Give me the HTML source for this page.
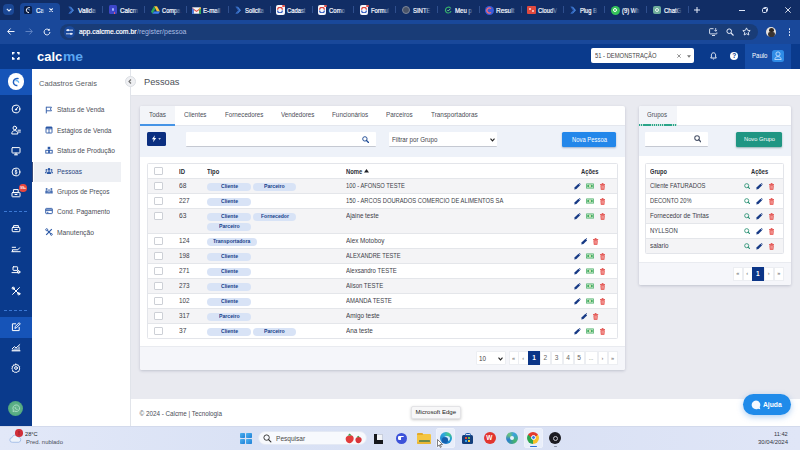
<!DOCTYPE html>
<html lang="pt-BR">
<head>
<meta charset="utf-8">
<title>Pessoas</title>
<style>
*{box-sizing:border-box;margin:0;padding:0}
html,body{width:800px;height:450px;overflow:hidden;background:#e9eaf0;font-family:"Liberation Sans",sans-serif;color:#333}
#root{position:relative;width:800px;height:450px;overflow:hidden}
#root div,#root span,#root svg{position:absolute}
.t{white-space:nowrap;line-height:1.16}
.card{background:#fff;border-radius:2px;box-shadow:0 1px 3px rgba(40,50,80,.22)}
</style>
</head>
<body>
<div id="root">
<section aria-label="browser tab strip" style="display:contents">
<div style="left:0px;top:0px;width:800px;height:21px;background:#112d65;"></div>
<div style="left:0px;top:19.5px;width:800px;height:24.5px;background:#19489a;"></div>
<div style="left:3px;top:4px;width:11px;height:11px;background:#1b4896;border-radius:4px"></div>
<svg style="left:6px;top:8px" width="6" height="4" viewBox="0 0 6 4"><path d="M.8.8 3 3 5.2.8" fill="none" stroke="#e8eefb" stroke-width="1.1"/></svg>
<div style="left:20px;top:3px;width:40px;height:18px;background:#19489a;border-radius:4px 4px 0 0"></div>
<div style="left:24.0px;top:6px;width:8px;height:8px;background:#0a1f4a;border-radius:1.5px"></div><svg style="left:24.0px;top:6px" width="8" height="8" viewBox="0 0 8 8"><path d="M5.8 1.6C4 1.2 2.3 2.4 2.3 4.1c0 1.5 1.2 2.5 2.7 2.4" fill="none" stroke="#fff" stroke-width="1"/><path d="M3.6 3.2c1-.4 2 .2 2 1.2" fill="none" stroke="#7fb6ff" stroke-width=".9"/></svg>
<span class="t" style="left:35.80px;top:7.00px;font-size:6.6px;color:#f6f8fe;transform:scaleX(0.948);transform-origin:0 0;-webkit-text-stroke:.22px #f6f8fe;">Ca</span>
<div style="left:40.5px;top:5px;width:4.5px;height:11px;background:linear-gradient(90deg,rgba(25,72,154,0),#19489a);"></div>
<svg style="left:67.55px;top:5.6px" width="6.500" height="8.300" viewBox="0 0 8 10"><path d="M.6.8h3L7.4 5 3.6 9.2h-3L4.2 5z" fill="#4a88dc"/><path d="M.6.800h1.800L5.600 5 2.400 9.200H.6L3.800 5z" fill="#2c5cb4"/></svg>
<span class="t" style="left:77.85px;top:7.00px;font-size:6.6px;color:#f6f8fe;transform:scaleX(1.008);transform-origin:0 0;-webkit-text-stroke:.22px #f6f8fe;">Valida</span>
<div style="left:89.85px;top:5px;width:7px;height:11px;background:linear-gradient(90deg,rgba(17,45,101,0),#112d65);"></div>
<div style="left:102.25px;top:6.3px;width:1px;height:7px;background:#2f4f8e;"></div>
<div style="left:108.7px;top:5px;width:8px;height:9px;background:#3d46c9;border-radius:1.5px"></div><div style="left:111.7px;top:8px;width:2px;height:3px;background:#9fb3ff;border-radius:1px"></div><div style="left:113.7px;top:12px;width:1.5px;height:1.5px;background:#ff5b6b;border-radius:1px"></div>
<span class="t" style="left:119.70px;top:7.00px;font-size:6.6px;color:#f6f8fe;transform:scaleX(0.963);transform-origin:0 0;-webkit-text-stroke:.22px #f6f8fe;">Calcm</span>
<div style="left:131.7px;top:5px;width:7px;height:11px;background:linear-gradient(90deg,rgba(17,45,101,0),#112d65);"></div>
<div style="left:144.1px;top:6.3px;width:1px;height:7px;background:#2f4f8e;"></div>
<svg style="left:150.55px;top:6px" width="9" height="8" viewBox="0 0 9 8"><path d="M3 .3h3L9 5.4H6z" fill="#f9c33a"/><path d="M3 .3 0 5.4l1.5 2.4L4.5 2.8z" fill="#2aa55a"/><path d="M1.5 7.8h6L9 5.4H3z" fill="#3d82f0"/></svg>
<span class="t" style="left:161.55px;top:7.00px;font-size:6.6px;color:#f6f8fe;transform:scaleX(0.870);transform-origin:0 0;-webkit-text-stroke:.22px #f6f8fe;">Compa</span>
<div style="left:174.05px;top:5px;width:7px;height:11px;background:linear-gradient(90deg,rgba(17,45,101,0),#112d65);"></div>
<div style="left:185.95000000000002px;top:6.3px;width:1px;height:7px;background:#2f4f8e;"></div>
<svg style="left:192.4px;top:6.8px" width="9" height="7" viewBox="0 0 9 7"><path d="M.3.300h8.400v6.400H.3z" fill="#f3f4f7"/><path d="M0 .6V7h1.800V3L4.500 5 7.200 3v4H9V.6L4.500 3.800z" fill="#e5493b"/><path d="M0 1v6h1.800V2.600z" fill="#3f7fe8"/><path d="M9 1v6H7.200V2.600z" fill="#34a853"/><path d="M7.200 3V.9L9 .6v1.200z" fill="#f6bb2d"/></svg>
<span class="t" style="left:203.40px;top:7.00px;font-size:6.6px;color:#f6f8fe;transform:scaleX(0.936);transform-origin:0 0;-webkit-text-stroke:.22px #f6f8fe;">E-mail</span>
<div style="left:214.9px;top:5px;width:7px;height:11px;background:linear-gradient(90deg,rgba(17,45,101,0),#112d65);"></div>
<div style="left:227.8px;top:6.3px;width:1px;height:7px;background:#2f4f8e;"></div>
<svg style="left:234.95px;top:5.6px" width="6.500" height="8.300" viewBox="0 0 8 10"><path d="M.6.8h3L7.4 5 3.6 9.2h-3L4.2 5z" fill="#4a88dc"/><path d="M.6.800h1.800L5.600 5 2.400 9.200H.6L3.800 5z" fill="#2c5cb4"/></svg>
<span class="t" style="left:245.25px;top:7.00px;font-size:6.6px;color:#f6f8fe;transform:scaleX(0.893);transform-origin:0 0;-webkit-text-stroke:.22px #f6f8fe;">Solicita</span>
<div style="left:258.25px;top:5px;width:7px;height:11px;background:linear-gradient(90deg,rgba(17,45,101,0),#112d65);"></div>
<div style="left:269.65px;top:6.3px;width:1px;height:7px;background:#2f4f8e;"></div>
<div style="left:276.1px;top:5px;width:8.5px;height:9.5px;background:#f6f7fb;border-radius:2px"></div><svg style="left:277.3px;top:6.6px" width="6" height="6" viewBox="0 0 6 6"><path d="M.6 2.700A2.400 2.400 0 0 1 5.400 2.700" fill="none" stroke="#e0453f" stroke-width="1.200"/><path d="M.6 3.500A2.400 2.400 0 0 0 5.400 3.500" fill="none" stroke="#3560c4" stroke-width="1.200"/></svg><div style="left:282.3px;top:4.8px;width:2.6px;height:2.6px;background:#e5554c;border-radius:50%"></div>
<span class="t" style="left:287.10px;top:7.00px;font-size:6.6px;color:#f6f8fe;transform:scaleX(0.885);transform-origin:0 0;-webkit-text-stroke:.22px #f6f8fe;">Cadast</span>
<div style="left:299.6px;top:5px;width:7px;height:11px;background:linear-gradient(90deg,rgba(17,45,101,0),#112d65);"></div>
<div style="left:311.5px;top:6.3px;width:1px;height:7px;background:#2f4f8e;"></div>
<div style="left:317.95px;top:5px;width:8.5px;height:9.5px;background:#f6f7fb;border-radius:2px"></div><svg style="left:319.15px;top:6.6px" width="6" height="6" viewBox="0 0 6 6"><path d="M.6 2.700A2.400 2.400 0 0 1 5.400 2.700" fill="none" stroke="#e0453f" stroke-width="1.200"/><path d="M.6 3.500A2.400 2.400 0 0 0 5.400 3.500" fill="none" stroke="#3560c4" stroke-width="1.200"/></svg><div style="left:324.15px;top:4.8px;width:2.6px;height:2.6px;background:#e5554c;border-radius:50%"></div>
<span class="t" style="left:328.95px;top:7.00px;font-size:6.6px;color:#f6f8fe;transform:scaleX(0.909);transform-origin:0 0;-webkit-text-stroke:.22px #f6f8fe;">Como</span>
<div style="left:338.95px;top:5px;width:7px;height:11px;background:linear-gradient(90deg,rgba(17,45,101,0),#112d65);"></div>
<div style="left:353.34999999999997px;top:6.3px;width:1px;height:7px;background:#2f4f8e;"></div>
<div style="left:359.8px;top:5px;width:8.5px;height:9.5px;background:#f6f7fb;border-radius:2px"></div><svg style="left:361.0px;top:6.6px" width="6" height="6" viewBox="0 0 6 6"><path d="M.6 2.700A2.400 2.400 0 0 1 5.400 2.700" fill="none" stroke="#e0453f" stroke-width="1.200"/><path d="M.6 3.500A2.400 2.400 0 0 0 5.400 3.500" fill="none" stroke="#3560c4" stroke-width="1.200"/></svg><div style="left:366.0px;top:4.8px;width:2.6px;height:2.6px;background:#e5554c;border-radius:50%"></div>
<span class="t" style="left:370.80px;top:7.00px;font-size:6.6px;color:#f6f8fe;transform:scaleX(0.877);transform-origin:0 0;-webkit-text-stroke:.22px #f6f8fe;">Formul</span>
<div style="left:382.8px;top:5px;width:7px;height:11px;background:linear-gradient(90deg,rgba(17,45,101,0),#112d65);"></div>
<div style="left:395.2px;top:6.3px;width:1px;height:7px;background:#2f4f8e;"></div>
<div style="left:401.65000000000003px;top:6px;width:8px;height:8px;background:#4a5468;border-radius:50%;border:1px solid #7d8699"></div>
<span class="t" style="left:412.65px;top:7.00px;font-size:6.6px;color:#f6f8fe;transform:scaleX(0.900);transform-origin:0 0;-webkit-text-stroke:.22px #f6f8fe;">SINTE</span>
<div style="left:424.15000000000003px;top:5px;width:7px;height:11px;background:linear-gradient(90deg,rgba(17,45,101,0),#112d65);"></div>
<div style="left:437.05px;top:6.3px;width:1px;height:7px;background:#2f4f8e;"></div>
<svg style="left:443.5px;top:6px" width="8" height="8" viewBox="0 0 8 8"><path d="M6.6 1.8C5 .6 2.4 1 1.6 3.2c-.7 2 .8 3.9 2.8 3.8 1.4 0 2.4-.9 2.6-2" fill="none" stroke="#35b36b" stroke-width="1.2"/><path d="M3.4 4.2 4.2 5 6.6 2.6" fill="none" stroke="#7fe0a3" stroke-width=".9"/></svg>
<span class="t" style="left:454.50px;top:7.00px;font-size:6.6px;color:#f6f8fe;transform:scaleX(0.927);transform-origin:0 0;-webkit-text-stroke:.22px #f6f8fe;">Meu p</span>
<div style="left:465.5px;top:5px;width:7px;height:11px;background:linear-gradient(90deg,rgba(17,45,101,0),#112d65);"></div>
<div style="left:478.9px;top:6.3px;width:1px;height:7px;background:#2f4f8e;"></div>
<div style="left:485.35px;top:5.5px;width:9px;height:9px;background:#3a5bd8;border-radius:50%"></div><svg style="left:485.35px;top:5.5px" width="9" height="9" viewBox="0 0 9 9"><path d="M6 2.6A2.5 2.5 0 1 0 6 6.4" fill="none" stroke="#ff6a6a" stroke-width="1.2"/></svg>
<span class="t" style="left:496.35px;top:7.00px;font-size:6.6px;color:#f6f8fe;transform:scaleX(0.989);transform-origin:0 0;-webkit-text-stroke:.22px #f6f8fe;">Result</span>
<div style="left:508.85px;top:5px;width:7px;height:11px;background:linear-gradient(90deg,rgba(17,45,101,0),#112d65);"></div>
<div style="left:520.75px;top:6.3px;width:1px;height:7px;background:#2f4f8e;"></div>
<div style="left:527.2px;top:5.5px;width:8.5px;height:8.5px;background:#e04a3f;border-radius:1px"></div><div style="left:529.2px;top:7.5px;width:2px;height:2px;background:#f7b4ae;"></div><div style="left:531.7px;top:10px;width:2px;height:2px;background:#f7b4ae;"></div>
<span class="t" style="left:538.20px;top:7.00px;font-size:6.6px;color:#f6f8fe;transform:scaleX(0.878);transform-origin:0 0;-webkit-text-stroke:.22px #f6f8fe;">CloudV</span>
<div style="left:551.2px;top:5px;width:7px;height:11px;background:linear-gradient(90deg,rgba(17,45,101,0),#112d65);"></div>
<div style="left:562.6px;top:6.3px;width:1px;height:7px;background:#2f4f8e;"></div>
<svg style="left:569.7500000000001px;top:5.6px" width="6.500" height="8.300" viewBox="0 0 8 10"><path d="M.6.8h3L7.4 5 3.6 9.2h-3L4.2 5z" fill="#4a88dc"/><path d="M.6.800h1.800L5.600 5 2.400 9.200H.6L3.800 5z" fill="#2c5cb4"/></svg>
<span class="t" style="left:580.05px;top:7.00px;font-size:6.6px;color:#f6f8fe;transform:scaleX(0.874);transform-origin:0 0;-webkit-text-stroke:.22px #f6f8fe;">Plug B</span>
<div style="left:591.0500000000001px;top:5px;width:7px;height:11px;background:linear-gradient(90deg,rgba(17,45,101,0),#112d65);"></div>
<div style="left:604.45px;top:6.3px;width:1px;height:7px;background:#2f4f8e;"></div>
<div style="left:610.9px;top:5.5px;width:9px;height:9px;background:#35c25a;border-radius:50%"></div><div style="left:613.4px;top:8px;width:4px;height:4px;background:transparent;border-radius:50%;border:1px solid #fff"></div>
<span class="t" style="left:621.90px;top:7.00px;font-size:6.6px;color:#f6f8fe;transform:scaleX(0.884);transform-origin:0 0;-webkit-text-stroke:.22px #f6f8fe;">(9) Wh</span>
<div style="left:633.4px;top:5px;width:7px;height:11px;background:linear-gradient(90deg,rgba(17,45,101,0),#112d65);"></div>
<div style="left:646.3px;top:6.3px;width:1px;height:7px;background:#2f4f8e;"></div>
<div style="left:652.75px;top:5.5px;width:8.5px;height:8.5px;background:#6fae9b;border-radius:2px"></div><div style="left:654.95px;top:7.7px;width:4px;height:4px;background:transparent;border-radius:50%;border:1px solid #e8f5f0"></div>
<span class="t" style="left:663.75px;top:7.00px;font-size:6.6px;color:#f6f8fe;transform:scaleX(0.917);transform-origin:0 0;-webkit-text-stroke:.22px #f6f8fe;">ChatG</span>
<div style="left:675.25px;top:5px;width:7px;height:11px;background:linear-gradient(90deg,rgba(17,45,101,0),#112d65);"></div>
<div style="left:688.15px;top:6.3px;width:1px;height:7px;background:#2f4f8e;"></div>
<svg style="left:49px;top:8px" width="4.200" height="4.200" viewBox="0 0 5 5"><path d="M.5.5l4 4M4.500.5l-4 4" stroke="#f2f5fd" stroke-width="1.300"/></svg>
<svg style="left:694px;top:7px" width="6" height="6" viewBox="0 0 6 6"><path d="M3 0v6M0 3h6" stroke="#e8eefb" stroke-width="1"/></svg>
<div style="left:739px;top:10px;width:6px;height:1px;background:#dfe7f8;"></div>
<div style="left:763.2px;top:6.8px;width:5px;height:5px;background:transparent;border:1px solid #dfe7f8;border-radius:1.500px"></div>
<div style="left:762px;top:8px;width:5px;height:5px;background:#112d65;border:1px solid #dfe7f8;border-radius:1.500px"></div>
<svg style="left:785px;top:7px" width="6" height="6" viewBox="0 0 6 6"><path d="M.3.3l5.400 5.400M5.700.3l-5.400 5.400" stroke="#eef2fc" stroke-width=".9"/></svg>
</section>
<section aria-label="toolbar" style="display:contents">
<svg style="left:7px;top:28px" width="8" height="7" viewBox="0 0 8 7"><path d="M3.600.5.700 3.500l2.900 3M.9 3.500h6.600" fill="none" stroke="#f0f4fd" stroke-width="1"/></svg>
<svg style="left:25px;top:28px" width="8" height="7" viewBox="0 0 8 7"><path d="M4.400.5l2.900 3-2.900 3M7.100 3.500H.5" fill="none" stroke="#5f82c2" stroke-width="1"/></svg>
<svg style="left:43px;top:27.5px" width="8" height="8" viewBox="0 0 8 8"><path d="M6.900 4A2.900 2.900 0 1 1 6 1.900" fill="none" stroke="#f0f4fd" stroke-width="1"/><path d="M6.800.4v2.300H4.500z" fill="#f0f4fd"/></svg>
<div style="left:60px;top:23.5px;width:698px;height:16px;background:#193c77;border-radius:8px"></div>
<div style="left:63.5px;top:25.5px;width:11px;height:12px;background:#19489a;border-radius:6px"></div>
<svg style="left:66px;top:28.5px" width="7" height="6" viewBox="0 0 7 6"><path d="M0 1.200h7M0 4.800h7" stroke="#e8eefb" stroke-width=".9"/><circle cx="2" cy="1.200" r="1.100" fill="#e8eefb"/><circle cx="5" cy="4.800" r="1.100" fill="#e8eefb"/></svg>
<span class="t" style="left:78.50px;top:28.00px;font-size:6.9px;color:#ffffff;transform:scaleX(0.987);transform-origin:0 0;-webkit-text-stroke:.2px #fff;">app.calcme.com.br</span>
<span class="t" style="left:136.80px;top:28.00px;font-size:6.9px;color:#a9bde3;transform:scaleX(1.008);transform-origin:0 0;">/register/pessoa</span>
<svg style="left:709px;top:27.5px" width="9" height="8" viewBox="0 0 9 8"><path d="M4.500.7H1.200a.6.600 0 0 0-.6.600v4a.6.600 0 0 0 .6.600h6.100a.6.600 0 0 0 .6-.6V4.500M3 7.500h3" fill="none" stroke="#e8eefb" stroke-width=".9"/><path d="M6.700 0v3.200M5.300 1.900l1.400 1.400 1.400-1.400" fill="none" stroke="#e8eefb" stroke-width=".8"/></svg>
<svg style="left:726px;top:27.5px" width="8" height="8" viewBox="0 0 8 8"><circle cx="3.200" cy="3.200" r="2.300" fill="none" stroke="#e8eefb" stroke-width="1"/><path d="M5 5l2.500 2.500" stroke="#e8eefb" stroke-width="1.100"/></svg>
<svg style="left:742px;top:27px" width="9" height="9" viewBox="0 0 9 9"><path d="M4.500.9l1.100 2.400 2.600.3-1.900 1.800.5 2.600-2.300-1.300-2.300 1.300.5-2.600L.8 3.600l2.600-.3z" fill="none" stroke="#e8eefb" stroke-width=".9" stroke-linejoin="round"/></svg>
<div style="left:766px;top:26.5px;width:10px;height:10px;background:#e9e4df;border-radius:50%"></div>
<div style="left:768.5px;top:27.5px;width:5px;height:4px;background:#2b2522;border-radius:50% 50% 40% 40%"></div>
<div style="left:767.5px;top:31.5px;width:7px;height:5px;background:#3b3431;border-radius:3px 3px 5px 5px"></div>
<div style="left:788.5px;top:28px;width:1.5px;height:1.5px;background:#e8eefb;border-radius:50%"></div>
<div style="left:788.5px;top:31px;width:1.5px;height:1.5px;background:#e8eefb;border-radius:50%"></div>
<div style="left:788.5px;top:34px;width:1.5px;height:1.5px;background:#e8eefb;border-radius:50%"></div>
</section>
<section aria-label="app header" style="display:contents">
<div style="left:0px;top:43.7px;width:800px;height:25.3px;background:#0a3a8c;"></div>
<svg style="left:12.200px;top:52.200px" width="7.600" height="7.600" viewBox="-.7 -.7 7.400 7.400"><path d="M0 1.800V0h1.800M4.200 0H6v1.800M6 4.200V6H4.200M1.800 6H0V4.200" fill="none" stroke="#fff" stroke-width="1.500"/></svg>
<span class="t" style="left:36.70px;top:49.00px;font-size:13.5px;color:#ffffff;font-weight:bold;transform:scaleX(0.963);transform-origin:0 0;">calc</span>
<span class="t" style="left:62.70px;top:49.00px;font-size:13.5px;color:#5aa6f2;font-weight:bold;transform:scaleX(1.025);transform-origin:0 0;">me</span>
<div style="left:591px;top:48px;width:103px;height:15px;background:#fff;border-radius:2px"></div>
<span class="t" style="left:594.50px;top:52.00px;font-size:6.5px;color:#444;transform:scaleX(0.896);transform-origin:0 0;">51 - DEMONSTRAÇÃO</span>
<svg style="left:677px;top:53.5px" width="4" height="4" viewBox="0 0 4 4"><path d="M.3.3l3.400 3.400M3.700.3.300 3.700" stroke="#666" stroke-width=".7"/></svg>
<svg style="left:687px;top:54.5px" width="4" height="3" viewBox="0 0 4 3"><path d="M0 .3h4L2 2.700z" fill="#777"/></svg>
<svg style="left:709.500px;top:51.500px" width="7" height="8" viewBox="0 0 7 8"><path d="M3.500.8C2.100.8 1.400 1.900 1.400 3.200v1.700L.7 6h5.600l-.7-1.100V3.200C5.600 1.900 4.900.8 3.500.8z" fill="none" stroke="#fff" stroke-width=".9"/><path d="M2.700 6.800a.8.800 0 0 0 1.600 0z" fill="#fff"/></svg>
<div style="left:730px;top:51.5px;width:8px;height:8px;background:#fff;border-radius:50%"></div>
<span class="t" style="left:732.30px;top:52.00px;font-size:6.5px;color:#0a3a8c;font-weight:bold;">?</span>
<div style="left:745px;top:43.7px;width:46px;height:25.3px;background:#164da7;"></div>
<span class="t" style="left:752.00px;top:52.00px;font-size:6.5px;color:#fff;transform:scaleX(0.932);transform-origin:0 0;">Paulo</span>
<div style="left:772px;top:49.5px;width:11.5px;height:12px;background:#2f8ce6;border-radius:2.5px"></div>
<svg style="left:774px;top:51px" width="8" height="9" viewBox="0 0 8 9"><circle cx="4" cy="3" r="2.100" fill="none" stroke="#cfe6ff" stroke-width=".8"/><path d="M.8 8.500C1 6.400 2.400 5.600 4 5.600s3 .8 3.200 2.900z" fill="none" stroke="#cfe6ff" stroke-width=".8"/></svg>
</section>
<section aria-label="icon bar" style="display:contents">
<div style="left:0px;top:69px;width:31.5px;height:358px;background:#0a3a8c;"></div>
<div style="left:0px;top:69px;width:31.5px;height:25.5px;background:#1654b8;"></div>
<div style="left:7.5px;top:73.2px;width:16.6px;height:16.6px;background:#fff;border-radius:50%"></div>
<svg style="left:9.800px;top:75.500px" width="12" height="12" viewBox="0 0 12 12"><path d="M8.600 2.600C6 1.800 3.300 3.500 3.400 6.200c.1 2.200 2 3.600 4 3.300" fill="none" stroke="#1f5fbf" stroke-width="1.500"/><path d="M5.400 5c1.400-.8 3.200 0 3.300 1.800" fill="none" stroke="#5db0f0" stroke-width="1.300"/></svg>
<svg style="left:11px;top:104px" width="10" height="10" viewBox="0 0 10 10" fill="none" stroke="#ffffff" stroke-width="1" stroke-linecap="round" stroke-linejoin="round"><circle cx="5" cy="5" r="3.900"/><path d="M5 5.500 6.800 3.200"/><circle cx="5" cy="5.600" r=".6" fill="#ffffff"/></svg>
<svg style="left:11px;top:125px" width="10" height="10" viewBox="0 0 10 10" fill="none" stroke="#ffffff" stroke-width="1" stroke-linecap="round" stroke-linejoin="round"><circle cx="3.800" cy="3" r="1.800"/><path d="M.8 8.600c0-2 1.300-3 3-3s3 1 3 3z"/><path d="M7 5.200h2.400M7 7h2.400"/></svg>
<svg style="left:11px;top:146px" width="10" height="10" viewBox="0 0 10 10" fill="none" stroke="#ffffff" stroke-width="1" stroke-linecap="round" stroke-linejoin="round"><rect x="1" y="1.600" width="8" height="5.400" rx=".6"/><path d="M3.500 8.800h3M5 7v1.800"/></svg>
<svg style="left:11px;top:167px" width="10" height="10" viewBox="0 0 10 10" fill="none" stroke="#ffffff" stroke-width="1" stroke-linecap="round" stroke-linejoin="round"><circle cx="5" cy="5" r="3.900"/><path d="M6 3.700c-.3-.5-1.900-.6-1.900.4 0 1 2 .6 2 1.700 0 1-1.700 1-2.100.3M5 2.700v4.600" stroke-width=".8"/></svg>
<svg style="left:11px;top:188px" width="10" height="10" viewBox="0 0 10 10" fill="none" stroke="#ffffff" stroke-width="1" stroke-linecap="round" stroke-linejoin="round"><rect x="1" y="4.600" width="8" height="4.200" rx=".5"/><rect x="2.800" y="1.600" width="4.400" height="3"/><path d="M4 6.500h2"/></svg>
<svg style="left:11px;top:223px" width="10" height="10" viewBox="0 0 10 10" fill="none" stroke="#ffffff" stroke-width="1" stroke-linecap="round" stroke-linejoin="round"><rect x="1.200" y="4.400" width="7.600" height="4.300" rx=".6"/><path d="M2.600 4.400V2.600h4.800v1.800M3.800 6.500h2.400"/></svg>
<svg style="left:11px;top:244px" width="10" height="10" viewBox="0 0 10 10" fill="none" stroke="#ffffff" stroke-width="1" stroke-linecap="round" stroke-linejoin="round"><path d="M.8 7.700h8.400M2 7.700 1.200 5.800h5.600l1.800-2"/><path d="M1.200 3.300h3.400"/></svg>
<svg style="left:11px;top:265px" width="10" height="10" viewBox="0 0 10 10" fill="none" stroke="#ffffff" stroke-width="1" stroke-linecap="round" stroke-linejoin="round"><rect x="2" y="1.800" width="4.600" height="3.600" rx=".4"/><path d="M1 7.600h6.500a1.500 1.500 0 0 0 0-2.200"/><circle cx="7.600" cy="7" r="1.300"/></svg>
<svg style="left:11px;top:286px" width="10" height="10" viewBox="0 0 10 10" fill="none" stroke="#ffffff" stroke-width="1" stroke-linecap="round" stroke-linejoin="round"><path d="M1.600 8.400 8.400 1.600M1.600 1.600l6.800 6.800"/><circle cx="2.200" cy="2.200" r="1.100"/><circle cx="7.800" cy="7.800" r="1.100"/></svg>
<div style="left:19.3px;top:184.3px;width:8px;height:7.5px;background:#e8453c;border-radius:3.800px"></div>
<span class="t" style="left:20.30px;top:187.00px;font-size:3.4px;color:#fff;font-weight:bold;">99+</span>
<div style="left:4px;top:210.5px;width:23px;height:0px;background:transparent;border-top:1px dashed #3b78d4"></div>
<div style="left:4px;top:309.5px;width:23px;height:0px;background:transparent;border-top:1px dashed #3b78d4"></div>
<div style="left:0px;top:316.5px;width:31.5px;height:21px;background:#1654b8;"></div>
<svg style="left:11px;top:321.5px" width="10" height="10" viewBox="0 0 10 10" fill="none" stroke="#ffffff" stroke-width="1" stroke-linecap="round" stroke-linejoin="round"><path d="M4.600 1.800H1.400v6.800h6.800V5.400"/><path d="M4 6l.4-1.600 3.700-3.700 1.200 1.200-3.700 3.700z"/></svg>
<svg style="left:11px;top:342px" width="10" height="10" viewBox="0 0 10 10" fill="none" stroke="#ffffff" stroke-width="1" stroke-linecap="round" stroke-linejoin="round"><path d="M1 8.800h8"/><path d="M1.200 6.800 3.400 4.600l1.600 1.400 3.800-3.400" /><path d="M2 8.800V7.600M4 8.800V6.800M6 8.800V6.600M8 8.800V5"/></svg>
<svg style="left:11px;top:363px" width="10" height="10" viewBox="0 0 10 10" fill="none" stroke="#ffffff" stroke-width="1" stroke-linecap="round" stroke-linejoin="round"><circle cx="5" cy="5" r="1.400"/><path d="M5 1l.8 1.100 1.300-.3.300 1.300 1.300.5-.5 1.400.8 1-1 .9.100 1.400-1.400.1-.7 1.200L5 9l-1.300.6-.7-1.200-1.400-.1.100-1.400-1-.9.800-1-.5-1.400 1.300-.5.300-1.300 1.300.3z" stroke-width=".9"/></svg>
<div style="left:8px;top:401px;width:15.4px;height:15.4px;background:radial-gradient(circle,#6ab890 0%,#58ad84 55%,#3f986b 100%);border-radius:50%"></div>
<svg style="left:11.500px;top:404.200px" width="8.500" height="8.500" viewBox="0 0 8 8"><path d="M4 .9A3.100 3.100 0 0 0 1.300 5.600L.9 7.100l1.600-.4A3.100 3.100 0 1 0 4 .9z" fill="none" stroke="#b4e2cb" stroke-width=".8"/><path d="M2.900 2.900c0 1.300 1 2.300 2.300 2.300" fill="none" stroke="#b4e2cb" stroke-width=".8"/></svg>
</section>
<section aria-label="sidebar" style="display:contents">
<div style="left:31.5px;top:69px;width:98.5px;height:358px;background:#fff;"></div>
<div style="left:130px;top:69px;width:1px;height:358px;background:#e1e4ea;"></div>
<span class="t" style="left:39.20px;top:80.00px;font-size:7.6px;color:#5a5e66;transform:scaleX(0.981);transform-origin:0 0;">Cadastros Gerais</span>
<div style="left:34px;top:162px;width:87px;height:19.5px;background:#eef0f4;"></div>
<div style="left:32.3px;top:162px;width:1px;height:19.5px;background:#3d4d78;"></div>
<svg style="left:45.2px;top:105.5px" width="8" height="8" viewBox="0 0 8 8" fill="none" stroke="#2a57a5" stroke-width=".9"><path d="M1.300.8v6.600M1.300 1.200h5.200L5.400 3l1.100 1.800H1.300"/></svg>
<span class="t" style="left:57.00px;top:106.00px;font-size:7.2px;color:#4a4e57;transform:scaleX(0.899);transform-origin:0 0;">Status de Venda</span>
<svg style="left:45.2px;top:125.9px" width="8" height="8" viewBox="0 0 8 8" fill="none" stroke="#2a57a5" stroke-width=".9"><rect x="1" y="1" width="6" height="6" rx=".5"/><path d="M1 2.800h6M4 2.800V7" /><path d="M1 1.600h6" stroke-width="1.300"/></svg>
<span class="t" style="left:57.00px;top:127.00px;font-size:7.2px;color:#4a4e57;transform:scaleX(0.908);transform-origin:0 0;">Estágios de Venda</span>
<svg style="left:45.2px;top:146.2px" width="8" height="8" viewBox="0 0 8 8" fill="none" stroke="#2a57a5" stroke-width=".9"><rect x="2.700" y=".8" width="2.600" height="2.600" fill="#2a57a5" stroke="none"/><rect x=".8" y="4.300" width="2.800" height="2.800"/><rect x="4.400" y="4.300" width="2.800" height="2.800"/></svg>
<span class="t" style="left:57.00px;top:147.00px;font-size:7.2px;color:#4a4e57;transform:scaleX(0.917);transform-origin:0 0;">Status de Produção</span>
<svg style="left:45.2px;top:166.8px" width="8" height="8" viewBox="0 0 8 8" fill="none" stroke="#2a57a5" stroke-width=".9"><g fill="#2a57a5" stroke="none"><circle cx="4" cy="2.400" r="1.300"/><path d="M1.800 7c0-1.900 1-2.800 2.200-2.800S6.200 5.100 6.200 7z"/><circle cx="1.400" cy="2.900" r=".9"/><circle cx="6.600" cy="2.900" r=".9"/><path d="M0 6.200c0-1.300.6-2 1.500-2 .3 0 .5.100.7.300-.5.500-.8 1.100-.9 1.700zM8 6.200c0-1.300-.6-2-1.500-2-.3 0-.5.100-.7.300.5.500.8 1.100.9 1.700z"/></g></svg>
<span class="t" style="left:57.00px;top:168.00px;font-size:7.2px;color:#27457f;transform:scaleX(0.905);transform-origin:0 0;">Pessoas</span>
<svg style="left:45.2px;top:186.8px" width="8" height="8" viewBox="0 0 8 8" fill="none" stroke="#2a57a5" stroke-width=".9"><g fill="#2a57a5" stroke="none" opacity=".85"><circle cx="1.600" cy="2" r="1"/><circle cx="6.400" cy="2" r="1"/><path d="M.3 6.500V4.400c0-.7.500-1.100 1.300-1.100s1.300.4 1.300 1.100v2.100zM5.100 6.500V4.400c0-.7.500-1.100 1.300-1.100s1.300.4 1.300 1.100v2.100z"/><path d="M3.400 2.200h1.200v3h.8L4 7.200 2.600 5.200h.8z"/></g></svg>
<span class="t" style="left:57.00px;top:188.00px;font-size:7.2px;color:#4a4e57;transform:scaleX(0.905);transform-origin:0 0;">Grupos de Preços</span>
<svg style="left:45.2px;top:207.2px" width="8" height="8" viewBox="0 0 8 8" fill="none" stroke="#2a57a5" stroke-width=".9"><rect x=".7" y="1.400" width="6.600" height="5.200" rx=".6"/><path d="M.7 3.100h6.600" stroke-width="1.400"/><path d="M1.800 5.300h1.600"/></svg>
<span class="t" style="left:57.00px;top:208.00px;font-size:7.2px;color:#4a4e57;transform:scaleX(0.913);transform-origin:0 0;">Cond. Pagamento</span>
<svg style="left:45.2px;top:227.6px" width="8" height="8" viewBox="0 0 8 8" fill="none" stroke="#2a57a5" stroke-width=".9"><path d="M1.200 6.800 6.800 1.200M1.200 1.200l5.600 5.600" stroke-width="1.200"/><circle cx="1.700" cy="1.700" r="1" fill="#fff"/><circle cx="6.400" cy="6.400" r=".9" fill="#fff"/></svg>
<span class="t" style="left:57.00px;top:229.00px;font-size:7.2px;color:#4a4e57;transform:scaleX(0.934);transform-origin:0 0;">Manutenção</span>
</section>
<section aria-label="title" style="display:contents">
<div style="left:131px;top:69px;width:669px;height:26.7px;background:#fff;border-bottom:1px solid #e3e5eb"></div>
<span class="t" style="left:144.20px;top:76.00px;font-size:9.8px;color:#4b4f57;transform:scaleX(0.944);transform-origin:0 0;">Pessoas</span>
<div style="left:124.7px;top:76px;width:11px;height:11px;background:#eff0f3;border-radius:50%;border:1px solid #dcdfe4"></div>
<svg style="left:127.900px;top:79px" width="4" height="5" viewBox="0 0 4 5"><path d="M3 .5 1 2.500l2 2" fill="none" stroke="#707070" stroke-width="1.100"/></svg>
</section>
<section aria-label="main card" style="display:contents">
<div class="card" style="left:139.500px;top:105.500px;width:485.500px;height:264.500px"></div>
<div style="left:139.5px;top:105.5px;width:35.5px;height:19.5px;background:#f3f5f9;border-radius:2px 0 0 0"></div>
<div style="left:175px;top:125px;width:450px;height:0.8px;background:#e4e7ee;"></div>
<span class="t" style="left:148.75px;top:111.00px;font-size:6.9px;color:#4a4e57;transform:scaleX(0.923);transform-origin:0 0;">Todas</span>
<span class="t" style="left:183.75px;top:111.00px;font-size:6.9px;color:#4a4e57;transform:scaleX(0.903);transform-origin:0 0;">Clientes</span>
<span class="t" style="left:224.50px;top:111.00px;font-size:6.9px;color:#4a4e57;transform:scaleX(0.904);transform-origin:0 0;">Fornecedores</span>
<span class="t" style="left:280.75px;top:111.00px;font-size:6.9px;color:#4a4e57;transform:scaleX(0.910);transform-origin:0 0;">Vendedores</span>
<span class="t" style="left:332.00px;top:111.00px;font-size:6.9px;color:#4a4e57;transform:scaleX(0.918);transform-origin:0 0;">Funcionários</span>
<span class="t" style="left:386.25px;top:111.00px;font-size:6.9px;color:#4a4e57;transform:scaleX(0.918);transform-origin:0 0;">Parceiros</span>
<span class="t" style="left:430.75px;top:111.00px;font-size:6.9px;color:#4a4e57;transform:scaleX(0.928);transform-origin:0 0;">Transportadoras</span>
<div style="left:139.5px;top:125.6px;width:485.5px;height:31px;background:#eef2f9;"></div>
<div style="left:139.5px;top:124.1px;width:35.5px;height:1.7px;background:#4594e6;"></div>
<div style="left:146.5px;top:132px;width:19.5px;height:14.2px;background:#0b2f80;border-radius:1.5px"></div>
<svg style="left:151px;top:134.700px" width="6" height="7.500" viewBox="0 0 6 8"><path d="M4 .2.700 4.500h2L1.900 7.800l3.500-4.600H3.300z" fill="#fff"/></svg>
<svg style="left:158.200px;top:137.800px" width="3.200" height="2" viewBox="0 0 4 3"><path d="M0 .3h4L2 2.700z" fill="#fff"/></svg>
<div style="left:186.25px;top:132.25px;width:189.5px;height:15px;background:#fff;border-bottom:1px solid #c5c9d2;border-radius:1px"></div>
<svg style="left:362.0px;top:135.5px" width="7" height="7" viewBox="0 0 7 7"><circle cx="2.900" cy="2.900" r="2.200" fill="none" stroke="#1d4a94" stroke-width=".95"/><path d="M4.500 4.500 6.500 6.500" stroke="#1d4a94" stroke-width="1.200" stroke-linecap="round"/></svg>
<div style="left:389px;top:132.25px;width:107.5px;height:15px;background:#fff;border-bottom:1px solid #c5c9d2;border-radius:1px"></div>
<span class="t" style="left:391.50px;top:136.00px;font-size:6.7px;color:#3f434b;transform:scaleX(0.926);transform-origin:0 0;">Filtrar por Grupo</span>
<svg style="left:489.500px;top:138px" width="5" height="4" viewBox="0 0 5 4"><path d="M.5.700 2.500 2.900 4.500.700" fill="none" stroke="#222" stroke-width="1.100"/></svg>
<div style="left:562px;top:132.25px;width:54px;height:15px;background:#2387ea;border-radius:1.5px;box-shadow:0 1px 2px rgba(20,60,120,.35)"></div>
<span class="t" style="left:572.00px;top:136.00px;font-size:6.3px;color:#fff;transform:scaleX(0.934);transform-origin:0 0;">Nova Pessoa</span>
<div style="left:146.5px;top:162.75px;width:471px;height:176px;background:#fff;border:1px solid #e3e5ea;border-radius:1.500px"></div>
<span class="t" style="left:179.00px;top:168.00px;font-size:6.6px;color:#2b2e34;font-weight:bold;transform:scaleX(0.909);transform-origin:0 0;">ID</span>
<span class="t" style="left:207.00px;top:168.00px;font-size:6.6px;color:#2b2e34;font-weight:bold;transform:scaleX(0.887);transform-origin:0 0;">Tipo</span>
<span class="t" style="left:345.50px;top:168.00px;font-size:6.6px;color:#2b2e34;font-weight:bold;transform:scaleX(0.886);transform-origin:0 0;">Nome</span>
<svg style="left:363.600px;top:169.400px" width="5" height="3.400" viewBox="0 0 5 3.400"><path d="M0 3.400h5L2.500 0z" fill="#1f2126"/></svg>
<span class="t" style="left:581.25px;top:168.00px;font-size:6.6px;color:#2b2e34;font-weight:bold;transform:scaleX(0.883);transform-origin:0 0;">Ações</span>
<div style="left:154.25px;top:166.75px;width:8.5px;height:8.5px;background:#fff;border:1px solid #cdd0d6;border-radius:1px"></div>
<div style="left:147.5px;top:177.75px;width:469px;height:15px;background:#f4f4f6;border-top:1px solid #e4e6ea"></div>
<div style="left:154.25px;top:181.65px;width:8.5px;height:8.5px;background:#fff;border:1px solid #cdd0d6;border-radius:1px"></div>
<span class="t" style="left:178.75px;top:182.00px;font-size:6.7px;color:#3c4048;transform:scaleX(0.993);transform-origin:0 0;">68</span>
<div style="left:207.0px;top:183.15px;width:44.3px;height:7.5px;background:#d8e3f6;border-radius:4px"></div><span class="t" style="left:220.65px;top:182.00px;font-size:6.1px;color:#173f8a;font-weight:bold;transform:scaleX(0.836);transform-origin:0 0;">Cliente</span>
<div style="left:252.8px;top:183.15px;width:43.5px;height:7.5px;background:#d8e3f6;border-radius:4px"></div><span class="t" style="left:264.18px;top:182.00px;font-size:6.1px;color:#173f8a;font-weight:bold;transform:scaleX(0.850);transform-origin:0 0;">Parceiro</span>
<span class="t" style="left:345.50px;top:182.00px;font-size:6.7px;color:#3c4048;transform:scaleX(0.863);transform-origin:0 0;">100 - AFONSO TESTE</span>
<svg style="left:574.35px;top:182.85px" width="6.800" height="6.800" viewBox="0 0 7 7"><path d="M.3 6.700.8 4.500 4.600.700 6.300 2.400 2.500 6.200z" fill="#173a85"/><path d="M5.100.500 5.600 0 7 1.400l-.5.500z" fill="#173a85"/></svg>
<svg style="left:586.25px;top:183.35px" width="8" height="6" viewBox="0 0 8 6"><rect x="0" y=".4" width="8" height="5.200" rx=".7" fill="#45ab62"/><rect x="1" y="1.300" width="6" height="3.400" fill="none" stroke="#d5f2dc" stroke-width=".6"/><circle cx="4" cy="3" r="1.100" fill="#f1f3c4"/></svg>
<svg style="left:599.9px;top:182.65px" width="5.200" height="7" viewBox="0 0 6 8"><path d="M0 1.200h6v.9H0z" fill="#de3835"/><path d="M2 .2h2v1H2z" fill="#de3835"/><path d="M.5 2.500h5L5.100 7.400a.5.500 0 0 1-.5.400H1.400a.5.500 0 0 1-.5-.4z" fill="#e4443f"/><path d="M2 3.400v3.300M3 3.400v3.300M4 3.400v3.300" stroke="#fbd3d0" stroke-width=".6"/></svg>
<div style="left:147.5px;top:192.75px;width:469px;height:15px;background:#fff;border-top:1px solid #e4e6ea"></div>
<div style="left:154.25px;top:196.65px;width:8.5px;height:8.5px;background:#fff;border:1px solid #cdd0d6;border-radius:1px"></div>
<span class="t" style="left:178.75px;top:197.00px;font-size:6.7px;color:#3c4048;transform:scaleX(0.948);transform-origin:0 0;">227</span>
<div style="left:207.0px;top:198.15px;width:44.3px;height:7.5px;background:#d8e3f6;border-radius:4px"></div><span class="t" style="left:220.65px;top:197.00px;font-size:6.1px;color:#173f8a;font-weight:bold;transform:scaleX(0.836);transform-origin:0 0;">Cliente</span>
<span class="t" style="left:345.50px;top:197.00px;font-size:6.7px;color:#3c4048;transform:scaleX(0.866);transform-origin:0 0;">150 - ARCOS DOURADOS COMERCIO DE ALIMENTOS SA</span>
<svg style="left:574.35px;top:197.85px" width="6.800" height="6.800" viewBox="0 0 7 7"><path d="M.3 6.700.8 4.500 4.600.700 6.300 2.400 2.500 6.200z" fill="#173a85"/><path d="M5.100.500 5.600 0 7 1.400l-.5.500z" fill="#173a85"/></svg>
<svg style="left:586.25px;top:198.35px" width="8" height="6" viewBox="0 0 8 6"><rect x="0" y=".4" width="8" height="5.200" rx=".7" fill="#45ab62"/><rect x="1" y="1.300" width="6" height="3.400" fill="none" stroke="#d5f2dc" stroke-width=".6"/><circle cx="4" cy="3" r="1.100" fill="#f1f3c4"/></svg>
<svg style="left:599.9px;top:197.65px" width="5.200" height="7" viewBox="0 0 6 8"><path d="M0 1.200h6v.9H0z" fill="#de3835"/><path d="M2 .2h2v1H2z" fill="#de3835"/><path d="M.5 2.500h5L5.100 7.400a.5.500 0 0 1-.5.400H1.400a.5.500 0 0 1-.5-.4z" fill="#e4443f"/><path d="M2 3.400v3.300M3 3.400v3.300M4 3.400v3.300" stroke="#fbd3d0" stroke-width=".6"/></svg>
<div style="left:147.5px;top:207.75px;width:469px;height:25px;background:#f4f4f6;border-top:1px solid #e4e6ea"></div>
<div style="left:154.25px;top:211.65px;width:8.5px;height:8.5px;background:#fff;border:1px solid #cdd0d6;border-radius:1px"></div>
<span class="t" style="left:178.75px;top:212.00px;font-size:6.7px;color:#3c4048;transform:scaleX(0.993);transform-origin:0 0;">63</span>
<div style="left:207.0px;top:213.15px;width:44.3px;height:7.5px;background:#d8e3f6;border-radius:4px"></div><span class="t" style="left:220.65px;top:212.00px;font-size:6.1px;color:#173f8a;font-weight:bold;transform:scaleX(0.836);transform-origin:0 0;">Cliente</span>
<div style="left:252.8px;top:213.15px;width:43.5px;height:7.5px;background:#d8e3f6;border-radius:4px"></div><span class="t" style="left:260.55px;top:212.00px;font-size:6.1px;color:#173f8a;font-weight:bold;transform:scaleX(0.834);transform-origin:0 0;">Fornecedor</span>
<div style="left:207.0px;top:223.15px;width:44.3px;height:7.5px;background:#d8e3f6;border-radius:4px"></div><span class="t" style="left:218.78px;top:222.00px;font-size:6.1px;color:#173f8a;font-weight:bold;transform:scaleX(0.850);transform-origin:0 0;">Parceiro</span>
<span class="t" style="left:345.50px;top:212.00px;font-size:6.7px;color:#3c4048;transform:scaleX(0.934);transform-origin:0 0;">Ajaine teste</span>
<svg style="left:574.35px;top:212.85px" width="6.800" height="6.800" viewBox="0 0 7 7"><path d="M.3 6.700.8 4.500 4.600.700 6.300 2.400 2.500 6.200z" fill="#173a85"/><path d="M5.100.500 5.600 0 7 1.400l-.5.500z" fill="#173a85"/></svg>
<svg style="left:586.25px;top:213.35px" width="8" height="6" viewBox="0 0 8 6"><rect x="0" y=".4" width="8" height="5.200" rx=".7" fill="#45ab62"/><rect x="1" y="1.300" width="6" height="3.400" fill="none" stroke="#d5f2dc" stroke-width=".6"/><circle cx="4" cy="3" r="1.100" fill="#f1f3c4"/></svg>
<svg style="left:599.9px;top:212.65px" width="5.200" height="7" viewBox="0 0 6 8"><path d="M0 1.200h6v.9H0z" fill="#de3835"/><path d="M2 .2h2v1H2z" fill="#de3835"/><path d="M.5 2.500h5L5.100 7.400a.5.500 0 0 1-.5.400H1.400a.5.500 0 0 1-.5-.4z" fill="#e4443f"/><path d="M2 3.400v3.300M3 3.400v3.300M4 3.400v3.300" stroke="#fbd3d0" stroke-width=".6"/></svg>
<div style="left:147.5px;top:232.75px;width:469px;height:15px;background:#fff;border-top:1px solid #e4e6ea"></div>
<div style="left:154.25px;top:236.65px;width:8.5px;height:8.5px;background:#fff;border:1px solid #cdd0d6;border-radius:1px"></div>
<span class="t" style="left:178.75px;top:237.00px;font-size:6.7px;color:#3c4048;transform:scaleX(0.948);transform-origin:0 0;">124</span>
<div style="left:207.0px;top:238.15px;width:50px;height:7.5px;background:#d8e3f6;border-radius:4px"></div><span class="t" style="left:213.38px;top:237.00px;font-size:6.1px;color:#173f8a;font-weight:bold;transform:scaleX(0.833);transform-origin:0 0;">Transportadora</span>
<span class="t" style="left:345.50px;top:237.00px;font-size:6.7px;color:#3c4048;transform:scaleX(0.946);transform-origin:0 0;">Alex Motoboy</span>
<svg style="left:580.6px;top:237.85px" width="6.800" height="6.800" viewBox="0 0 7 7"><path d="M.3 6.700.8 4.500 4.600.700 6.300 2.400 2.500 6.200z" fill="#173a85"/><path d="M5.100.500 5.600 0 7 1.400l-.5.500z" fill="#173a85"/></svg>
<svg style="left:593.4px;top:237.65px" width="5.200" height="7" viewBox="0 0 6 8"><path d="M0 1.200h6v.9H0z" fill="#de3835"/><path d="M2 .2h2v1H2z" fill="#de3835"/><path d="M.5 2.500h5L5.100 7.400a.5.500 0 0 1-.5.400H1.400a.5.500 0 0 1-.5-.4z" fill="#e4443f"/><path d="M2 3.400v3.300M3 3.400v3.300M4 3.400v3.300" stroke="#fbd3d0" stroke-width=".6"/></svg>
<div style="left:147.5px;top:247.75px;width:469px;height:15px;background:#f4f4f6;border-top:1px solid #e4e6ea"></div>
<div style="left:154.25px;top:251.65px;width:8.5px;height:8.5px;background:#fff;border:1px solid #cdd0d6;border-radius:1px"></div>
<span class="t" style="left:178.75px;top:252.00px;font-size:6.7px;color:#3c4048;transform:scaleX(0.948);transform-origin:0 0;">198</span>
<div style="left:207.0px;top:253.15px;width:44.3px;height:7.5px;background:#d8e3f6;border-radius:4px"></div><span class="t" style="left:220.65px;top:252.00px;font-size:6.1px;color:#173f8a;font-weight:bold;transform:scaleX(0.836);transform-origin:0 0;">Cliente</span>
<span class="t" style="left:345.50px;top:252.00px;font-size:6.7px;color:#3c4048;transform:scaleX(0.856);transform-origin:0 0;">ALEXANDRE TESTE</span>
<svg style="left:574.35px;top:252.85px" width="6.800" height="6.800" viewBox="0 0 7 7"><path d="M.3 6.700.8 4.500 4.600.700 6.300 2.400 2.500 6.200z" fill="#173a85"/><path d="M5.100.500 5.600 0 7 1.400l-.5.500z" fill="#173a85"/></svg>
<svg style="left:586.25px;top:253.35000000000002px" width="8" height="6" viewBox="0 0 8 6"><rect x="0" y=".4" width="8" height="5.200" rx=".7" fill="#45ab62"/><rect x="1" y="1.300" width="6" height="3.400" fill="none" stroke="#d5f2dc" stroke-width=".6"/><circle cx="4" cy="3" r="1.100" fill="#f1f3c4"/></svg>
<svg style="left:599.9px;top:252.65px" width="5.200" height="7" viewBox="0 0 6 8"><path d="M0 1.200h6v.9H0z" fill="#de3835"/><path d="M2 .2h2v1H2z" fill="#de3835"/><path d="M.5 2.500h5L5.100 7.400a.5.500 0 0 1-.5.400H1.400a.5.500 0 0 1-.5-.4z" fill="#e4443f"/><path d="M2 3.400v3.300M3 3.400v3.300M4 3.400v3.300" stroke="#fbd3d0" stroke-width=".6"/></svg>
<div style="left:147.5px;top:262.75px;width:469px;height:15px;background:#fff;border-top:1px solid #e4e6ea"></div>
<div style="left:154.25px;top:266.65px;width:8.5px;height:8.5px;background:#fff;border:1px solid #cdd0d6;border-radius:1px"></div>
<span class="t" style="left:178.75px;top:267.00px;font-size:6.7px;color:#3c4048;transform:scaleX(0.948);transform-origin:0 0;">271</span>
<div style="left:207.0px;top:268.15px;width:44.3px;height:7.5px;background:#d8e3f6;border-radius:4px"></div><span class="t" style="left:220.65px;top:267.00px;font-size:6.1px;color:#173f8a;font-weight:bold;transform:scaleX(0.836);transform-origin:0 0;">Cliente</span>
<span class="t" style="left:345.50px;top:267.00px;font-size:6.7px;color:#3c4048;transform:scaleX(0.895);transform-origin:0 0;">Alexsandro TESTE</span>
<svg style="left:574.35px;top:267.85px" width="6.800" height="6.800" viewBox="0 0 7 7"><path d="M.3 6.700.8 4.500 4.600.700 6.300 2.400 2.500 6.200z" fill="#173a85"/><path d="M5.100.500 5.600 0 7 1.400l-.5.500z" fill="#173a85"/></svg>
<svg style="left:586.25px;top:268.34999999999997px" width="8" height="6" viewBox="0 0 8 6"><rect x="0" y=".4" width="8" height="5.200" rx=".7" fill="#45ab62"/><rect x="1" y="1.300" width="6" height="3.400" fill="none" stroke="#d5f2dc" stroke-width=".6"/><circle cx="4" cy="3" r="1.100" fill="#f1f3c4"/></svg>
<svg style="left:599.9px;top:267.65px" width="5.200" height="7" viewBox="0 0 6 8"><path d="M0 1.200h6v.9H0z" fill="#de3835"/><path d="M2 .2h2v1H2z" fill="#de3835"/><path d="M.5 2.500h5L5.100 7.400a.5.500 0 0 1-.5.400H1.400a.5.500 0 0 1-.5-.4z" fill="#e4443f"/><path d="M2 3.400v3.300M3 3.400v3.300M4 3.400v3.300" stroke="#fbd3d0" stroke-width=".6"/></svg>
<div style="left:147.5px;top:277.75px;width:469px;height:15px;background:#f4f4f6;border-top:1px solid #e4e6ea"></div>
<div style="left:154.25px;top:281.65px;width:8.5px;height:8.5px;background:#fff;border:1px solid #cdd0d6;border-radius:1px"></div>
<span class="t" style="left:178.75px;top:282.00px;font-size:6.7px;color:#3c4048;transform:scaleX(0.948);transform-origin:0 0;">273</span>
<div style="left:207.0px;top:283.15px;width:44.3px;height:7.5px;background:#d8e3f6;border-radius:4px"></div><span class="t" style="left:220.65px;top:282.00px;font-size:6.1px;color:#173f8a;font-weight:bold;transform:scaleX(0.836);transform-origin:0 0;">Cliente</span>
<span class="t" style="left:345.50px;top:282.00px;font-size:6.7px;color:#3c4048;transform:scaleX(0.895);transform-origin:0 0;">Alison TESTE</span>
<svg style="left:574.35px;top:282.85px" width="6.800" height="6.800" viewBox="0 0 7 7"><path d="M.3 6.700.8 4.500 4.600.700 6.300 2.400 2.500 6.200z" fill="#173a85"/><path d="M5.100.500 5.600 0 7 1.400l-.5.500z" fill="#173a85"/></svg>
<svg style="left:586.25px;top:283.34999999999997px" width="8" height="6" viewBox="0 0 8 6"><rect x="0" y=".4" width="8" height="5.200" rx=".7" fill="#45ab62"/><rect x="1" y="1.300" width="6" height="3.400" fill="none" stroke="#d5f2dc" stroke-width=".6"/><circle cx="4" cy="3" r="1.100" fill="#f1f3c4"/></svg>
<svg style="left:599.9px;top:282.65px" width="5.200" height="7" viewBox="0 0 6 8"><path d="M0 1.200h6v.9H0z" fill="#de3835"/><path d="M2 .2h2v1H2z" fill="#de3835"/><path d="M.5 2.500h5L5.100 7.400a.5.500 0 0 1-.5.400H1.400a.5.500 0 0 1-.5-.4z" fill="#e4443f"/><path d="M2 3.400v3.300M3 3.400v3.300M4 3.400v3.300" stroke="#fbd3d0" stroke-width=".6"/></svg>
<div style="left:147.5px;top:292.75px;width:469px;height:15px;background:#fff;border-top:1px solid #e4e6ea"></div>
<div style="left:154.25px;top:296.65px;width:8.5px;height:8.5px;background:#fff;border:1px solid #cdd0d6;border-radius:1px"></div>
<span class="t" style="left:178.75px;top:297.00px;font-size:6.7px;color:#3c4048;transform:scaleX(0.948);transform-origin:0 0;">102</span>
<div style="left:207.0px;top:298.15px;width:44.3px;height:7.5px;background:#d8e3f6;border-radius:4px"></div><span class="t" style="left:220.65px;top:297.00px;font-size:6.1px;color:#173f8a;font-weight:bold;transform:scaleX(0.836);transform-origin:0 0;">Cliente</span>
<span class="t" style="left:345.50px;top:297.00px;font-size:6.7px;color:#3c4048;transform:scaleX(0.889);transform-origin:0 0;">AMANDA TESTE</span>
<svg style="left:574.35px;top:297.85px" width="6.800" height="6.800" viewBox="0 0 7 7"><path d="M.3 6.700.8 4.500 4.600.700 6.300 2.400 2.500 6.200z" fill="#173a85"/><path d="M5.100.500 5.600 0 7 1.400l-.5.500z" fill="#173a85"/></svg>
<svg style="left:586.25px;top:298.34999999999997px" width="8" height="6" viewBox="0 0 8 6"><rect x="0" y=".4" width="8" height="5.200" rx=".7" fill="#45ab62"/><rect x="1" y="1.300" width="6" height="3.400" fill="none" stroke="#d5f2dc" stroke-width=".6"/><circle cx="4" cy="3" r="1.100" fill="#f1f3c4"/></svg>
<svg style="left:599.9px;top:297.65px" width="5.200" height="7" viewBox="0 0 6 8"><path d="M0 1.200h6v.9H0z" fill="#de3835"/><path d="M2 .2h2v1H2z" fill="#de3835"/><path d="M.5 2.500h5L5.100 7.400a.5.500 0 0 1-.5.400H1.400a.5.500 0 0 1-.5-.4z" fill="#e4443f"/><path d="M2 3.400v3.300M3 3.400v3.300M4 3.400v3.300" stroke="#fbd3d0" stroke-width=".6"/></svg>
<div style="left:147.5px;top:307.75px;width:469px;height:15px;background:#f4f4f6;border-top:1px solid #e4e6ea"></div>
<div style="left:154.25px;top:311.65px;width:8.5px;height:8.5px;background:#fff;border:1px solid #cdd0d6;border-radius:1px"></div>
<span class="t" style="left:178.75px;top:312.00px;font-size:6.7px;color:#3c4048;transform:scaleX(0.948);transform-origin:0 0;">317</span>
<div style="left:207.0px;top:313.15px;width:44.3px;height:7.5px;background:#d8e3f6;border-radius:4px"></div><span class="t" style="left:218.78px;top:312.00px;font-size:6.1px;color:#173f8a;font-weight:bold;transform:scaleX(0.850);transform-origin:0 0;">Parceiro</span>
<span class="t" style="left:345.50px;top:312.00px;font-size:6.7px;color:#3c4048;transform:scaleX(0.953);transform-origin:0 0;">Amigo teste</span>
<svg style="left:580.6px;top:312.85px" width="6.800" height="6.800" viewBox="0 0 7 7"><path d="M.3 6.700.8 4.500 4.600.700 6.300 2.400 2.500 6.200z" fill="#173a85"/><path d="M5.100.500 5.600 0 7 1.400l-.5.500z" fill="#173a85"/></svg>
<svg style="left:593.4px;top:312.65px" width="5.200" height="7" viewBox="0 0 6 8"><path d="M0 1.200h6v.9H0z" fill="#de3835"/><path d="M2 .2h2v1H2z" fill="#de3835"/><path d="M.5 2.500h5L5.100 7.400a.5.500 0 0 1-.5.400H1.400a.5.500 0 0 1-.5-.4z" fill="#e4443f"/><path d="M2 3.400v3.300M3 3.400v3.300M4 3.400v3.300" stroke="#fbd3d0" stroke-width=".6"/></svg>
<div style="left:147.5px;top:322.75px;width:469px;height:15px;background:#fff;border-top:1px solid #e4e6ea"></div>
<div style="left:154.25px;top:326.65px;width:8.5px;height:8.5px;background:#fff;border:1px solid #cdd0d6;border-radius:1px"></div>
<span class="t" style="left:178.75px;top:327.00px;font-size:6.7px;color:#3c4048;transform:scaleX(0.993);transform-origin:0 0;">37</span>
<div style="left:207.0px;top:328.15px;width:44.3px;height:7.5px;background:#d8e3f6;border-radius:4px"></div><span class="t" style="left:220.65px;top:327.00px;font-size:6.1px;color:#173f8a;font-weight:bold;transform:scaleX(0.836);transform-origin:0 0;">Cliente</span>
<div style="left:252.8px;top:328.15px;width:43.5px;height:7.5px;background:#d8e3f6;border-radius:4px"></div><span class="t" style="left:264.18px;top:327.00px;font-size:6.1px;color:#173f8a;font-weight:bold;transform:scaleX(0.850);transform-origin:0 0;">Parceiro</span>
<span class="t" style="left:345.50px;top:327.00px;font-size:6.7px;color:#3c4048;transform:scaleX(0.945);transform-origin:0 0;">Ana teste</span>
<svg style="left:574.35px;top:327.85px" width="6.800" height="6.800" viewBox="0 0 7 7"><path d="M.3 6.700.8 4.500 4.600.700 6.300 2.400 2.500 6.200z" fill="#173a85"/><path d="M5.100.500 5.600 0 7 1.400l-.5.500z" fill="#173a85"/></svg>
<svg style="left:586.25px;top:328.34999999999997px" width="8" height="6" viewBox="0 0 8 6"><rect x="0" y=".4" width="8" height="5.200" rx=".7" fill="#45ab62"/><rect x="1" y="1.300" width="6" height="3.400" fill="none" stroke="#d5f2dc" stroke-width=".6"/><circle cx="4" cy="3" r="1.100" fill="#f1f3c4"/></svg>
<svg style="left:599.9px;top:327.65px" width="5.200" height="7" viewBox="0 0 6 8"><path d="M0 1.200h6v.9H0z" fill="#de3835"/><path d="M2 .2h2v1H2z" fill="#de3835"/><path d="M.5 2.500h5L5.100 7.400a.5.500 0 0 1-.5.400H1.400a.5.500 0 0 1-.5-.4z" fill="#e4443f"/><path d="M2 3.400v3.300M3 3.400v3.300M4 3.400v3.300" stroke="#fbd3d0" stroke-width=".6"/></svg>
<div style="left:139.5px;top:346px;width:485.5px;height:24px;background:#f5f6fa;border-top:1px solid #e9ebf0;border-radius:0 0 2px 2px"></div>
<div style="left:475.5px;top:351.25px;width:30px;height:13.75px;background:#fff;border:1px solid #eceef2;border-radius:1px"></div>
<span class="t" style="left:478.75px;top:355.00px;font-size:6.5px;color:#444;transform:scaleX(0.968);transform-origin:0 0;">10</span>
<svg style="left:498px;top:356.500px" width="5" height="4" viewBox="0 0 5 4"><path d="M.5.700 2.500 2.900 4.500.700" fill="none" stroke="#222" stroke-width="1.100"/></svg>
<div style="left:508.75px;top:351.25px;width:10.0px;height:13.75px;background:#fff;border:1px solid #eceef2"></div><span class="t" style="left:511.94px;top:355.00px;font-size:5.6px;color:#666;">«</span><div style="left:518.25px;top:351.25px;width:10.25px;height:13.75px;background:#fff;border:1px solid #eceef2"></div><span class="t" style="left:522.19px;top:355.00px;font-size:5.6px;color:#666;">‹</span><div style="left:528px;top:351.25px;width:12px;height:13.75px;background:#0b3587;"></div><span class="t" style="left:532.16px;top:354.00px;font-size:6.6px;color:#fff;font-weight:bold;">1</span><div style="left:540px;top:351.25px;width:11.25px;height:13.75px;background:#fff;border:1px solid #eceef2"></div><span class="t" style="left:543.54px;top:354.00px;font-size:6.6px;color:#666;">2</span><div style="left:550.75px;top:351.25px;width:12.25px;height:13.75px;background:#fff;border:1px solid #eceef2"></div><span class="t" style="left:554.79px;top:354.00px;font-size:6.6px;color:#666;">3</span><div style="left:562.5px;top:351.25px;width:11.75px;height:13.75px;background:#fff;border:1px solid #eceef2"></div><span class="t" style="left:566.29px;top:354.00px;font-size:6.6px;color:#666;">4</span><div style="left:573.75px;top:351.25px;width:11.25px;height:13.75px;background:#fff;border:1px solid #eceef2"></div><span class="t" style="left:577.29px;top:354.00px;font-size:6.6px;color:#666;">5</span><div style="left:584.5px;top:351.25px;width:13.5px;height:13.75px;background:#fff;border:1px solid #eceef2"></div><span class="t" style="left:588.67px;top:355.00px;font-size:5.6px;color:#666;">...</span><div style="left:597.5px;top:351.25px;width:10.5px;height:13.75px;background:#fff;border:1px solid #eceef2"></div><span class="t" style="left:601.57px;top:355.00px;font-size:5.6px;color:#666;">›</span><div style="left:607.5px;top:351.25px;width:10.5px;height:13.75px;background:#fff;border:1px solid #eceef2"></div><span class="t" style="left:610.94px;top:355.00px;font-size:5.6px;color:#666;">»</span>
</section>
<section aria-label="groups card" style="display:contents">
<div class="card" style="left:639px;top:105.500px;width:151.800px;height:179.500px"></div>
<div style="left:639px;top:105.5px;width:37.7px;height:19.5px;background:#f3f5f9;border-radius:2px 0 0 0"></div>
<div style="left:676.7px;top:125px;width:114px;height:0.8px;background:#e4e7ee;"></div>
<span class="t" style="left:647.30px;top:111.00px;font-size:6.9px;color:#4a4e57;transform:scaleX(0.884);transform-origin:0 0;">Grupos</span>
<div style="left:639px;top:125.6px;width:151.8px;height:30.6px;background:#eef2f9;"></div>
<div style="left:639px;top:124.1px;width:37.7px;height:1.5px;background:repeating-linear-gradient(90deg,#2ba58a 0 1.400px,#bfe3d9 1.400px 2.100px);"></div>
<div style="left:645px;top:131.8px;width:62.8px;height:15.2px;background:#fff;border-bottom:1px solid #c5c9d2;border-radius:1px"></div>
<svg style="left:694.0999999999999px;top:135.3px" width="7.4" height="7.4" viewBox="0 0 7 7"><circle cx="2.900" cy="2.900" r="2.200" fill="none" stroke="#465066" stroke-width=".95"/><path d="M4.500 4.500 6.500 6.500" stroke="#465066" stroke-width="1.200" stroke-linecap="round"/></svg>
<div style="left:736px;top:131.8px;width:46.4px;height:15.2px;background:#1f9683;border-radius:1.5px;box-shadow:0 1px 2px rgba(10,80,70,.4)"></div>
<span class="t" style="left:744.00px;top:135.00px;font-size:6.1px;color:#fff;transform:scaleX(0.943);transform-origin:0 0;">Novo Grupo</span>
<div style="left:645px;top:162.75px;width:139px;height:91.25px;background:#fff;border:1px solid #e3e5ea;border-radius:1.500px"></div>
<span class="t" style="left:650.00px;top:168.00px;font-size:6.6px;color:#2b2e34;font-weight:bold;transform:scaleX(0.859);transform-origin:0 0;">Grupo</span>
<span class="t" style="left:750.70px;top:168.00px;font-size:6.6px;color:#2b2e34;font-weight:bold;transform:scaleX(0.868);transform-origin:0 0;">Ações</span>
<div style="left:646px;top:177.75px;width:137px;height:15px;background:#f4f4f6;border-top:1px solid #e4e6ea"></div>
<span class="t" style="left:650.00px;top:182.00px;font-size:6.7px;color:#3c4048;transform:scaleX(0.879);transform-origin:0 0;">Cliente FATURADOS</span>
<svg style="left:743.95px;top:182.9px" width="6.5" height="6.5" viewBox="0 0 7 7"><circle cx="2.900" cy="2.900" r="2.200" fill="none" stroke="#2f9478" stroke-width=".95"/><path d="M4.500 4.500 6.500 6.500" stroke="#2f9478" stroke-width="1.200" stroke-linecap="round"/></svg>
<svg style="left:755.9px;top:182.75px" width="6.800" height="6.800" viewBox="0 0 7 7"><path d="M.3 6.700.8 4.500 4.600.700 6.300 2.400 2.500 6.200z" fill="#173a85"/><path d="M5.100.500 5.600 0 7 1.400l-.5.500z" fill="#173a85"/></svg>
<svg style="left:768.6999999999999px;top:182.55px" width="5.200" height="7" viewBox="0 0 6 8"><path d="M0 1.200h6v.9H0z" fill="#de3835"/><path d="M2 .2h2v1H2z" fill="#de3835"/><path d="M.5 2.500h5L5.100 7.400a.5.500 0 0 1-.5.400H1.400a.5.500 0 0 1-.5-.4z" fill="#e4443f"/><path d="M2 3.400v3.300M3 3.400v3.300M4 3.400v3.300" stroke="#fbd3d0" stroke-width=".6"/></svg>
<div style="left:646px;top:192.75px;width:137px;height:15px;background:#fff;border-top:1px solid #e4e6ea"></div>
<span class="t" style="left:650.00px;top:197.00px;font-size:6.7px;color:#3c4048;transform:scaleX(0.855);transform-origin:0 0;">DECONTO 20%</span>
<svg style="left:743.95px;top:197.9px" width="6.5" height="6.5" viewBox="0 0 7 7"><circle cx="2.900" cy="2.900" r="2.200" fill="none" stroke="#2f9478" stroke-width=".95"/><path d="M4.500 4.500 6.500 6.500" stroke="#2f9478" stroke-width="1.200" stroke-linecap="round"/></svg>
<svg style="left:755.9px;top:197.75px" width="6.800" height="6.800" viewBox="0 0 7 7"><path d="M.3 6.700.8 4.500 4.600.700 6.300 2.400 2.500 6.200z" fill="#173a85"/><path d="M5.100.500 5.600 0 7 1.400l-.5.500z" fill="#173a85"/></svg>
<svg style="left:768.6999999999999px;top:197.55px" width="5.200" height="7" viewBox="0 0 6 8"><path d="M0 1.200h6v.9H0z" fill="#de3835"/><path d="M2 .2h2v1H2z" fill="#de3835"/><path d="M.5 2.500h5L5.100 7.400a.5.500 0 0 1-.5.400H1.400a.5.500 0 0 1-.5-.4z" fill="#e4443f"/><path d="M2 3.400v3.300M3 3.400v3.300M4 3.400v3.300" stroke="#fbd3d0" stroke-width=".6"/></svg>
<div style="left:646px;top:207.75px;width:137px;height:15px;background:#f4f4f6;border-top:1px solid #e4e6ea"></div>
<span class="t" style="left:650.00px;top:212.00px;font-size:6.7px;color:#3c4048;transform:scaleX(0.932);transform-origin:0 0;">Fornecedor de Tintas</span>
<svg style="left:743.95px;top:212.9px" width="6.5" height="6.5" viewBox="0 0 7 7"><circle cx="2.900" cy="2.900" r="2.200" fill="none" stroke="#2f9478" stroke-width=".95"/><path d="M4.500 4.500 6.500 6.500" stroke="#2f9478" stroke-width="1.200" stroke-linecap="round"/></svg>
<svg style="left:755.9px;top:212.75px" width="6.800" height="6.800" viewBox="0 0 7 7"><path d="M.3 6.700.8 4.500 4.600.700 6.300 2.400 2.500 6.200z" fill="#173a85"/><path d="M5.100.500 5.600 0 7 1.400l-.5.500z" fill="#173a85"/></svg>
<svg style="left:768.6999999999999px;top:212.55px" width="5.200" height="7" viewBox="0 0 6 8"><path d="M0 1.200h6v.9H0z" fill="#de3835"/><path d="M2 .2h2v1H2z" fill="#de3835"/><path d="M.5 2.500h5L5.100 7.400a.5.500 0 0 1-.5.400H1.400a.5.500 0 0 1-.5-.4z" fill="#e4443f"/><path d="M2 3.400v3.300M3 3.400v3.300M4 3.400v3.300" stroke="#fbd3d0" stroke-width=".6"/></svg>
<div style="left:646px;top:222.75px;width:137px;height:15px;background:#fff;border-top:1px solid #e4e6ea"></div>
<span class="t" style="left:650.00px;top:227.00px;font-size:6.7px;color:#3c4048;transform:scaleX(0.886);transform-origin:0 0;">NYLLSON</span>
<svg style="left:743.95px;top:227.9px" width="6.5" height="6.5" viewBox="0 0 7 7"><circle cx="2.900" cy="2.900" r="2.200" fill="none" stroke="#2f9478" stroke-width=".95"/><path d="M4.500 4.500 6.500 6.500" stroke="#2f9478" stroke-width="1.200" stroke-linecap="round"/></svg>
<svg style="left:755.9px;top:227.75px" width="6.800" height="6.800" viewBox="0 0 7 7"><path d="M.3 6.700.8 4.500 4.600.700 6.300 2.400 2.500 6.200z" fill="#173a85"/><path d="M5.100.500 5.600 0 7 1.400l-.5.500z" fill="#173a85"/></svg>
<svg style="left:768.6999999999999px;top:227.55px" width="5.200" height="7" viewBox="0 0 6 8"><path d="M0 1.200h6v.9H0z" fill="#de3835"/><path d="M2 .2h2v1H2z" fill="#de3835"/><path d="M.5 2.500h5L5.100 7.400a.5.500 0 0 1-.5.400H1.400a.5.500 0 0 1-.5-.4z" fill="#e4443f"/><path d="M2 3.400v3.300M3 3.400v3.300M4 3.400v3.300" stroke="#fbd3d0" stroke-width=".6"/></svg>
<div style="left:646px;top:237.75px;width:137px;height:15px;background:#f4f4f6;border-top:1px solid #e4e6ea"></div>
<span class="t" style="left:650.00px;top:242.00px;font-size:6.7px;color:#3c4048;transform:scaleX(0.942);transform-origin:0 0;">salario</span>
<svg style="left:743.95px;top:242.9px" width="6.5" height="6.5" viewBox="0 0 7 7"><circle cx="2.900" cy="2.900" r="2.200" fill="none" stroke="#2f9478" stroke-width=".95"/><path d="M4.500 4.500 6.500 6.500" stroke="#2f9478" stroke-width="1.200" stroke-linecap="round"/></svg>
<svg style="left:755.9px;top:242.75px" width="6.800" height="6.800" viewBox="0 0 7 7"><path d="M.3 6.700.8 4.500 4.600.700 6.300 2.400 2.500 6.200z" fill="#173a85"/><path d="M5.100.500 5.600 0 7 1.400l-.5.500z" fill="#173a85"/></svg>
<svg style="left:768.6999999999999px;top:242.55px" width="5.200" height="7" viewBox="0 0 6 8"><path d="M0 1.200h6v.9H0z" fill="#de3835"/><path d="M2 .2h2v1H2z" fill="#de3835"/><path d="M.5 2.500h5L5.100 7.400a.5.500 0 0 1-.5.400H1.400a.5.500 0 0 1-.5-.4z" fill="#e4443f"/><path d="M2 3.400v3.300M3 3.400v3.300M4 3.400v3.300" stroke="#fbd3d0" stroke-width=".6"/></svg>
<div style="left:639px;top:261.6px;width:151.8px;height:23.4px;background:#f5f6fa;border-top:1px solid #e9ebf0;border-radius:0 0 2px 2px"></div>
<div style="left:733.2px;top:266.5px;width:9.799999999999955px;height:14px;background:#fff;border:1px solid #eceef2"></div><span class="t" style="left:736.29px;top:270.00px;font-size:5.6px;color:#666;">«</span><div style="left:742.5px;top:266.5px;width:10.0px;height:14px;background:#fff;border:1px solid #eceef2"></div><span class="t" style="left:746.32px;top:270.00px;font-size:5.6px;color:#666;">‹</span><div style="left:752px;top:266.5px;width:11.700000000000045px;height:14px;background:#0b3587;"></div><span class="t" style="left:756.01px;top:270.00px;font-size:6.6px;color:#fff;font-weight:bold;">1</span><div style="left:763.7px;top:266.5px;width:10.599999999999909px;height:14px;background:#fff;border:1px solid #eceef2"></div><span class="t" style="left:767.82px;top:270.00px;font-size:5.6px;color:#666;">›</span><div style="left:773.8px;top:266.5px;width:10.700000000000045px;height:14px;background:#fff;border:1px solid #eceef2"></div><span class="t" style="left:777.34px;top:270.00px;font-size:5.6px;color:#666;">»</span>
</section>
<section aria-label="footer" style="display:contents">
<div style="left:131px;top:399.3px;width:669px;height:27.2px;background:#fff;"></div>
<span class="t" style="left:139.50px;top:410.00px;font-size:6.3px;color:#4a4e57;">© 2024 - Calcme | Tecnologia</span>
<div style="left:743px;top:393.75px;width:47.75px;height:20.75px;background:#1f8bea;border-radius:10.500px;box-shadow:0 2px 6px rgba(30,120,220,.35)"></div>
<svg style="left:750.500px;top:399.800px;transform:scaleX(-1)" width="10" height="10" viewBox="0 0 10 10"><path d="M5 .6a4.300 4.300 0 0 0-3.700 6.500L.7 9.300l2.300-.6A4.300 4.300 0 1 0 5 .6z" fill="#f4f9ff"/></svg>
<span class="t" style="left:763.00px;top:401.00px;font-size:7px;color:#fff;font-weight:bold;transform:scaleX(0.964);transform-origin:0 0;">Ajuda</span>
</section>
<section aria-label="taskbar" style="display:contents">
<div style="left:0px;top:426px;width:800px;height:24px;background:linear-gradient(90deg,#e2e8f8 0%,#dae2f5 30%,#d8e0f4 60%,#e0e6f7 100%);border-top:1px solid #d3daec"></div>
<svg style="left:9px;top:434.200px" width="13.500" height="9" viewBox="0 0 14 10"><path d="M3.200 9.200a2.600 2.600 0 0 1-.3-5.200 3.600 3.600 0 0 1 6.900-.5 2.900 2.900 0 0 1 .6 5.700z" fill="#eef3fb" stroke="#8fb0e2" stroke-width=".8"/></svg>
<div style="left:15px;top:429px;width:7.6px;height:7.6px;background:#d02f3a;border-radius:50%"></div>
<span class="t" style="left:18.10px;top:431.00px;font-size:4.8px;color:#7c1420;font-weight:bold;">!</span>
<span class="t" style="left:25.40px;top:431.00px;font-size:5.9px;color:#1c1f26;transform:scaleX(0.956);transform-origin:0 0;">28°C</span>
<span class="t" style="left:25.50px;top:439.00px;font-size:5.9px;color:#4a4f5c;transform:scaleX(1.007);transform-origin:0 0;">Pred. nublado</span>
<div style="left:239.6px;top:432.6px;width:5.8px;height:5.5px;background:linear-gradient(135deg,#4fb4f1,#1f7fd6);border-radius:.8px"></div>
<div style="left:246.0px;top:432.6px;width:5.8px;height:5.5px;background:linear-gradient(135deg,#4fb4f1,#1f7fd6);border-radius:.8px"></div>
<div style="left:239.6px;top:438.70000000000005px;width:5.8px;height:5.5px;background:linear-gradient(135deg,#4fb4f1,#1f7fd6);border-radius:.8px"></div>
<div style="left:246.0px;top:438.70000000000005px;width:5.8px;height:5.5px;background:linear-gradient(135deg,#4fb4f1,#1f7fd6);border-radius:.8px"></div>
<div style="left:258px;top:430.75px;width:109px;height:14.25px;background:#f7f9fd;border-radius:7.200px;border:1px solid #e4e9f4"></div>
<svg style="left:263.200px;top:434.300px" width="8.500" height="8.500" viewBox="0 0 8.500 8.500"><circle cx="3.600" cy="3.600" r="2.700" fill="none" stroke="#2a2a2a" stroke-width=".9"/><path d="M5.600 5.600 7.900 7.900" stroke="#2a2a2a" stroke-width="1.100" stroke-linecap="round"/></svg>
<span class="t" style="left:275.70px;top:435.00px;font-size:7px;color:#4a4a4a;transform:scaleX(0.938);transform-origin:0 0;">Pesquisar</span>
<svg style="left:345px;top:432.500px" width="18" height="11" viewBox="0 0 18 11"><path d="M4.500 2.400c2.600-.6 4.500 1 4.200 3.700C8.400 8.600 6 10.400 4.300 10.300 2.300 10.200.4 7.800.7 5.300 1 3.200 2.800 2.500 4.500 2.400z" fill="#e23c3c"/><path d="M13.200 4c2-.4 3.700.9 3.500 3-.2 1.900-1.800 3.200-3.300 3.200-1.700 0-3.100-1.600-3-3.500C10.500 5 11.800 4.200 13.200 4z" fill="#d9343a"/><path d="M2.600 2.600 4.700.6l2 2z" fill="#3e9b4a"/><path d="M11.600 4.300l1.600-1.600 1.700 1.500z" fill="#3e9b4a"/></svg>
<div style="left:373.5px;top:433.5px;width:9.5px;height:10px;background:#f2f4f8;border:1px solid #c9cfdc"></div>
<div style="left:373.5px;top:433.5px;width:3.5px;height:10px;background:#16181d;"></div>
<div style="left:373.5px;top:440px;width:9.5px;height:3.5px;background:#16181d;"></div>
<div style="left:395.5px;top:432.5px;width:11.5px;height:11.5px;background:#3c52d9;border-radius:50%"></div>
<div style="left:398px;top:435.5px;width:6px;height:4.5px;background:#fff;border-radius:1.200px"></div>
<div style="left:400.5px;top:436.5px;width:4px;height:3px;background:#3c52d9;border-radius:.6px"></div>
<div style="left:417px;top:433.5px;width:14.2px;height:10.5px;background:#f4c542;border-radius:1.200px"></div>
<div style="left:417px;top:432.5px;width:6px;height:2.5px;background:#e3a92a;border-radius:1px 1px 0 0"></div>
<div style="left:419px;top:439.5px;width:10.5px;height:2.5px;background:#6a8a4a;border-radius:.5px"></div>
<div style="left:417px;top:442px;width:14.2px;height:2px;background:#e9b634;border-radius:0 0 1.200px 1.200px"></div>
<div style="left:436.25px;top:428px;width:18.25px;height:20px;background:#e9eefa;border-radius:2px;border:1px solid #eef2fb"></div>
<div style="left:439.5px;top:432px;width:12px;height:12px;background:conic-gradient(from 200deg,#1b6fc2,#2fa7df 35%,#46c98a 55%,#1d9bd8 75%,#1b6fc2);border-radius:50%"></div>
<div style="left:444px;top:435.5px;width:6px;height:5.5px;background:#cdeafb;border-radius:50%"></div>
<div style="left:441.5px;top:437px;width:6.5px;height:6px;background:#155fae;border-radius:50%"></div>
<div style="left:461.75px;top:434.5px;width:11.5px;height:9.5px;background:#133e7c;border-radius:1.500px"></div>
<div style="left:464.5px;top:432.8px;width:6px;height:3px;background:transparent;border:1px solid #1f5aa8;border-radius:1.500px 1.500px 0 0"></div>
<div style="left:465px;top:437px;width:2.2px;height:2.2px;background:#e94f3a;"></div>
<div style="left:467.6px;top:437px;width:2.2px;height:2.2px;background:#6cc04a;"></div>
<div style="left:465px;top:439.6px;width:2.2px;height:2.2px;background:#2fa3e8;"></div>
<div style="left:467.6px;top:439.6px;width:2.2px;height:2.2px;background:#f7c531;"></div>
<div style="left:483.5px;top:432px;width:12px;height:12px;background:#e2352f;border-radius:50%"></div>
<span class="t" style="left:486.20px;top:434.00px;font-size:6.5px;color:#fff;font-weight:bold;">W</span>
<div style="left:505.75px;top:432px;width:12px;height:12px;background:conic-gradient(from 30deg,#3aa0e0,#46b36b 30%,#2b7fd0 60%,#6cc37a 80%,#3aa0e0);border-radius:50%"></div>
<div style="left:509.5px;top:435.5px;width:4.5px;height:4.5px;background:#e8f4fb;border-radius:50%"></div>
<div style="left:524.25px;top:428px;width:18.25px;height:20px;background:#e9eefa;border-radius:2px;border:1px solid #eef2fb"></div>
<div style="left:527.25px;top:431.5px;width:12px;height:12px;background:conic-gradient(from -60deg,#e33b2e 0 120deg,#f7c12c 120deg 240deg,#2ea44f 240deg 360deg);border-radius:50%"></div>
<div style="left:530.75px;top:435px;width:5px;height:5px;background:#3b7de9;border-radius:50%;border:1px solid #fff"></div>
<div style="left:529.5px;top:446.2px;width:7.5px;height:1.3px;background:#2a6fd6;border-radius:1px"></div>
<div style="left:549px;top:432px;width:12px;height:12px;background:#1b1b22;border-radius:50%"></div>
<div style="left:552.5px;top:435.5px;width:5px;height:5px;background:transparent;border-radius:50%;border:1px solid #c8c8d0"></div>
<div style="left:553.5px;top:446.3px;width:3px;height:1px;background:#8b93a6;border-radius:1px"></div>
<span class="t" style="left:774.25px;top:431.00px;font-size:5.9px;color:#33363e;transform:scaleX(0.960);transform-origin:0 0;">11:42</span>
<span class="t" style="left:758.00px;top:439.00px;font-size:5.9px;color:#33363e;transform:scaleX(1.016);transform-origin:0 0;">30/04/2024</span>
<div style="left:411.25px;top:405.5px;width:50px;height:13.25px;background:#f7f7f8;border-radius:2px;box-shadow:0 1px 3px rgba(0,0,0,.22);border:1px solid #e3e3e6"></div>
<span class="t" style="left:415.50px;top:408.00px;font-size:6.1px;color:#222;">Microsoft Edge</span>
<svg style="left:436.500px;top:438.500px" width="6" height="9" viewBox="0 0 6 9"><path d="M.5.500v7l1.700-1.600 1.100 2.500 1-.4-1.100-2.500h2.300z" fill="#fff" stroke="#333" stroke-width=".6"/></svg>
</section>
</div>
</body>
</html>
